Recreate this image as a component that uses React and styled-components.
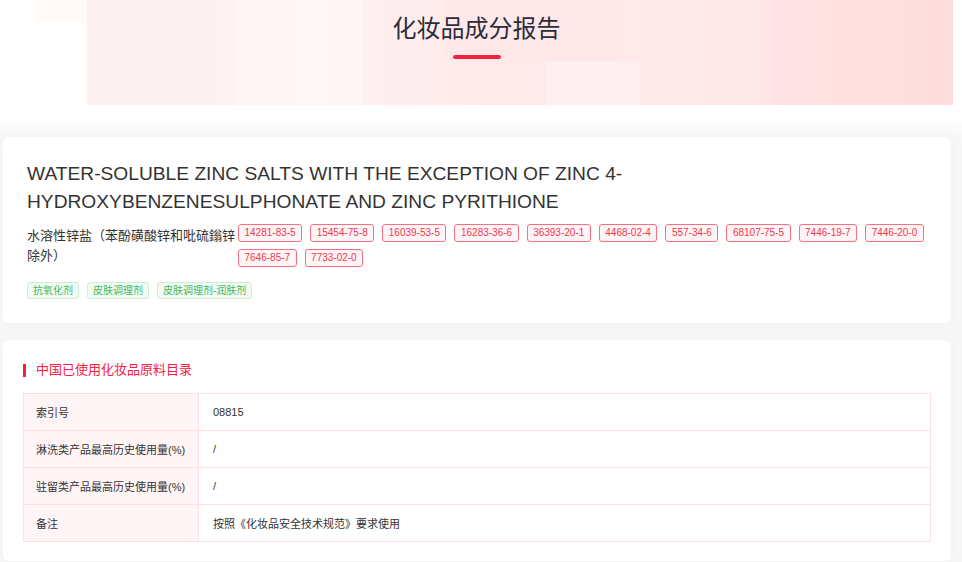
import React from 'react'
import styled, { createGlobalStyle } from 'styled-components'

const GlobalStyle = createGlobalStyle`
  body {
    margin: 0;
    background: #f7f7f7;
    font-family: "Liberation Sans", "Noto Sans CJK SC", sans-serif;
    color: #333;
  }
`

const Header = styled.header`
  height: 105px;
  padding-top: 10px;
  box-sizing: border-box;
  display: flex;
  flex-direction: column;
  align-items: center;
  padding-right: 9px;
  background:
    linear-gradient(#fffaf8, #fffaf8) 36px 0 / 51px 23px no-repeat,
    linear-gradient(rgba(255,255,255,0.4), rgba(255,255,255,0.4)) 236px 0 / 127px 105px no-repeat,
    linear-gradient(rgba(255,210,214,0.1), rgba(255,210,214,0.1)) 442px 0 / 180px 61px no-repeat,
    linear-gradient(rgba(255,255,255,0.25), rgba(255,255,255,0.25)) 545px 61px / 95px 44px no-repeat,
    linear-gradient(rgba(255,200,204,0.08), rgba(255,200,204,0.08)) 773px 0 / 180px 105px no-repeat,
    linear-gradient(90deg, #fdf0f1 0%, #fef2f3 25%, #ffeaeb 45%, #ffe9ea 70%, #ffdedd 100%) 87px 0 / calc(100% - 96px) 105px no-repeat,
    #fff;
`

const PageTitle = styled.h1`
  margin: 0;
  font-family: "Noto Sans CJK SC", sans-serif;
  font-size: 24px;
  line-height: 34px;
  font-weight: 400;
  color: #2c2d3a;
`

const TitleBar = styled.span`
  margin-top: 11px;
  width: 48px;
  height: 4px;
  border-radius: 2px;
  background: #f5223f;
`

const Main = styled.main`
  padding: 32px 11px 20px 3px;
  background: linear-gradient(#fff 0, #fff 12px, #f7f7f7 32px);
  display: flex;
  flex-direction: column;
  gap: 17px;
`

const Card = styled.section`
  background: #fff;
  border-radius: 6px;
  box-shadow: 0 0 10px rgba(0, 0, 0, 0.03);
  padding: ${p => p.$pad};
`

const EnName = styled.h2`
  margin: 0;
  font-size: 19.2px;
  line-height: 28px;
  font-weight: 400;
  color: #333;
`

const NameRow = styled.div`
  margin-top: 8px;
  display: flex;
  align-items: flex-start;
`

const CnName = styled.div`
  width: 211px;
  flex-shrink: 0;
  font-size: 13px;
  line-height: 20px;
  margin-top: 2px;
  color: #333;
`

const TagList = styled.div`
  display: flex;
  flex-wrap: wrap;
  column-gap: 8px;
  row-gap: 7px;
  margin-top: ${p => p.$top || '0'};
`

const CasTag = styled.span`
  height: 18px;
  line-height: 16px;
  padding: 0 5.5px;
  box-sizing: border-box;
  border: 1px solid #f7707f;
  border-radius: 3px;
  background: #fff5f6;
  color: #f0364f;
  font-size: 10px;
`

const FuncTag = styled.span`
  height: 17px;
  line-height: 15px;
  padding: 0 5px;
  box-sizing: border-box;
  border: 1px solid #cdeed4;
  border-radius: 3px;
  background: #f1fbf3;
  color: #43b85c;
  font-size: 10px;
`

const SectionTitle = styled.h3`
  margin: 0 0 14px;
  display: flex;
  align-items: center;
  gap: 10px;
  font-size: 13px;
  line-height: 18px;
  font-weight: 400;
  color: #f5223f;
  &::before {
    content: '';
    width: 3px;
    height: 13px;
    background: #f5223f;
  }
`

const Table = styled.table`
  width: 100%;
  table-layout: fixed;
  border-collapse: collapse;
  font-size: 11px;
  color: #333;
`

const Label = styled.th`
  width: 150px;
  height: 36px;
  padding: 0 12px;
  text-align: left;
  white-space: nowrap;
  font-weight: 400;
  background: #fff5f6;
  border: 1px solid #ffdfe3;
`

const Value = styled.td`
  padding: 0 14px;
  border: 1px solid #ffdfe3;
`

const casList = [
  '14281-83-5', '15454-75-8', '16039-53-5', '16283-36-6', '36393-20-1', '4468-02-4',
  '557-34-6', '68107-75-5', '7446-19-7', '7446-20-0', '7646-85-7', '7733-02-0',
]

const funcs = ['抗氧化剂', '皮肤调理剂', '皮肤调理剂-润肤剂']

const rows = [
  ['索引号', '08815'],
  ['淋洗类产品最高历史使用量(%)', '/'],
  ['驻留类产品最高历史使用量(%)', '/'],
  ['备注', '按照《化妆品安全技术规范》要求使用'],
]

export default function App() {
  return (
    <>
      <GlobalStyle />
      <Header>
        <PageTitle>化妆品成分报告</PageTitle>
        <TitleBar />
      </Header>
      <Main>
        <Card $pad="23px 24px 24px">
          <EnName>
            WATER-SOLUBLE ZINC SALTS WITH THE EXCEPTION OF ZINC 4-
            <br />
            HYDROXYBENZENESULPHONATE AND ZINC PYRITHIONE
          </EnName>
          <NameRow>
            <CnName>水溶性锌盐（苯酚磺酸锌和吡硫鎓锌除外）</CnName>
            <TagList>
              {casList.map(c => <CasTag key={c}>{c}</CasTag>)}
            </TagList>
          </NameRow>
          <TagList $top="15px">
            {funcs.map(f => <FuncTag key={f}>{f}</FuncTag>)}
          </TagList>
        </Card>
        <Card $pad="21px 20px 19px">
          <SectionTitle>中国已使用化妆品原料目录</SectionTitle>
          <Table>
            <tbody>
              {rows.map(([k, v]) => (
                <tr key={k}>
                  <Label>{k}</Label>
                  <Value>{v}</Value>
                </tr>
              ))}
            </tbody>
          </Table>
        </Card>
      </Main>
    </>
  )
}
